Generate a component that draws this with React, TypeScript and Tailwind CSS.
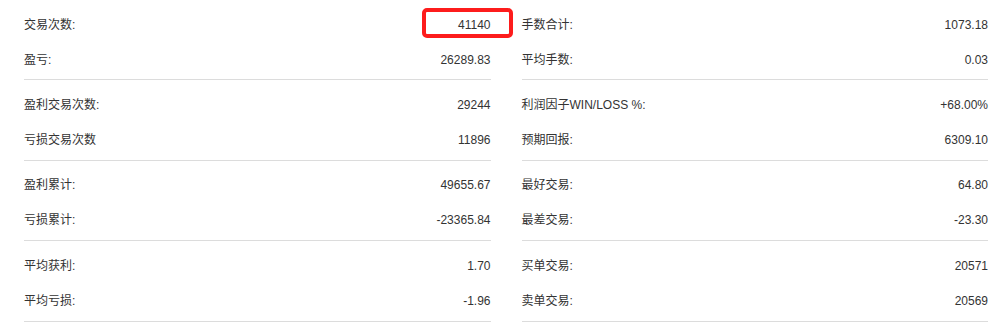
const columns = [
  [
    [
      { label: "交易次数:", value: "41140", mark: true },
      { label: "盈亏:", value: "26289.83" },
    ],
    [
      { label: "盈利交易次数:", value: "29244" },
      { label: "亏损交易次数", value: "11896" },
    ],
    [
      { label: "盈利累计:", value: "49655.67" },
      { label: "亏损累计:", value: "-23365.84" },
    ],
    [
      { label: "平均获利:", value: "1.70" },
      { label: "平均亏损:", value: "-1.96" },
    ],
  ],
  [
    [
      { label: "手数合计:", value: "1073.18" },
      { label: "平均手数:", value: "0.03" },
    ],
    [
      { label: "利润因子WIN/LOSS %:", value: "+68.00%" },
      { label: "预期回报:", value: "6309.10" },
    ],
    [
      { label: "最好交易:", value: "64.80" },
      { label: "最差交易:", value: "-23.30" },
    ],
    [
      { label: "买单交易:", value: "20571" },
      { label: "卖单交易:", value: "20569" },
    ],
  ],
]

type Item = { label: string; value: string; mark?: boolean }

function StatRow({ item }: { item: Item }) {
  return (
    <div className="relative flex h-[35px] items-center justify-between">
      <span>{item.label}</span>
      <span>{item.value}</span>
      {item.mark && (
        <div className="absolute right-[-22px] top-[1px] h-[30px] w-[91px] rounded-[5px] border-[4px] border-[#fd1c1c]" />
      )}
    </div>
  )
}

export default function App() {
  return (
    <div
      className="grid h-[324px] w-[1003px] grid-cols-2 gap-x-[31px] overflow-hidden bg-white pl-[24px] pr-[15px] text-[12px] text-[#333333]"
      style={{ fontFamily: '"Liberation Sans", "Noto Sans CJK SC", sans-serif' }}
    >
      {columns.map((groups, colIndex) => (
        <div key={colIndex} className="flex flex-col">
          {groups.map((group, groupIndex) => (
            <div key={groupIndex} className="flex flex-col border-b border-[#dcdcdc] pt-[7px] pb-[2.4px]">
              {group.map((item, itemIndex) => (
                <StatRow key={itemIndex} item={item} />
              ))}
            </div>
          ))}
        </div>
      ))}
    </div>
  )
}
